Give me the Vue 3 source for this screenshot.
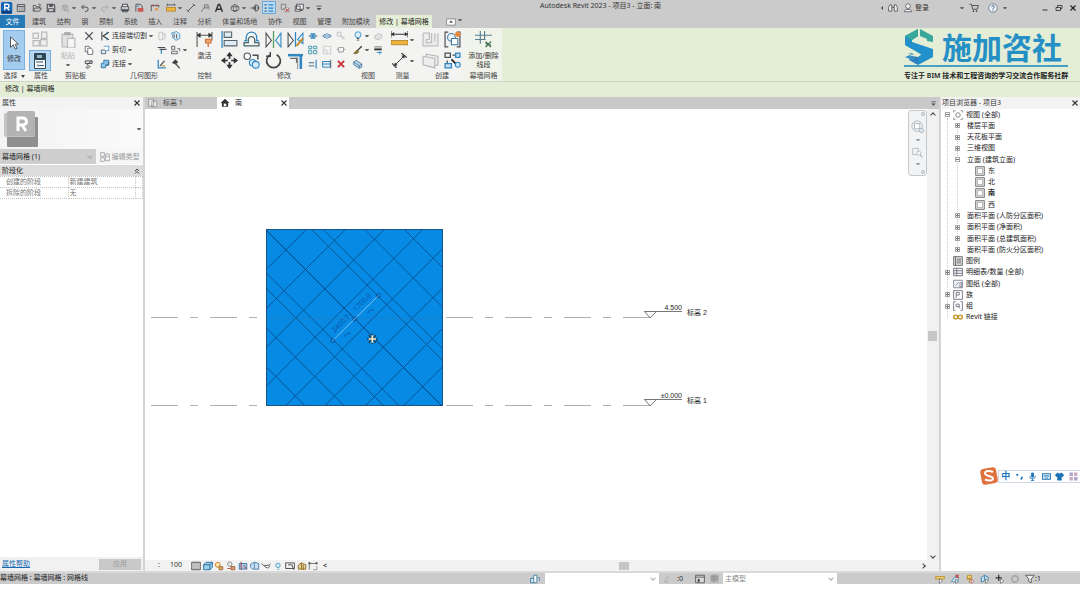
<script setup>
import { h } from 'vue'

const K = '#4a4f55'
const B = '#2f86c1'
const line = (d, c = K, w = 1.4, f = 'none') => `<path d="${d}" stroke="${c}" stroke-width="${w}" fill="${f}"/>`

const icons = {
  logo: `<rect x="0" y="0" width="15" height="16" rx="2" fill="#1565b4"/><rect x="1" y="12" width="13" height="3" fill="#0c3f7c"/>` + line('M5 11V3h3.5a2.2 2.2 0 0 1 0 4.6H5M8 7.6l3 3.4', '#fff', 1.8),
  home: line('M2 2.500h12v11H2zM2 5.500h12') + line('M5 8h2M9 8h3M5 11h2M9 11h3', K, 1.2),
  open: line('M2 13V4h4l1 2h5v2M2 13l3-5h10l-3 5zM10 2h3v3'),
  save: line('M2 2h10l2 2v10H2z', K, 1.8) + `<rect x="5" y="2" width="6" height="4" fill="${K}"/>` + line('M4 14V9h8v5'),
  sync: line('M4 5l4-2 4 2v5l-4 2-4-2zM4 5l4 2 4-2M8 7v5M11 13h4', '#999'),
  undo: line('M6 3L2.500 6.500 6 10M3 6.500h6.500a3.500 3.500 0 0 1 0 7H8', K, 1.6),
  redo: line('M10 3l3.500 3.500L10 10M13 6.500H6.500a3.500 3.500 0 0 0 0 7H8', '#aaa', 1.6),
  print: line('M4 6V2h8v4M2 6h12v6H2zM4 10h8v4H4z', K, 1.6, '#e8e8e8'),
  pdf: line('M3 14V2h7l3 3v5', K) + `<rect x="6" y="8" width="9" height="6" fill="#c9584e"/>` + line('M4 5h4', B),
  thin: line('M2 3v10M14 3v4M2 4h12', K) + line('M5 2v4M11 2v4', '#c9584e', 1.6) + `<rect x="8" y="8" width="5" height="4" fill="#e49a5a"/>`,
  ruler: line('M2 3h12M2 1v4M14 1v4') + `<rect x="1" y="7" width="14" height="6" fill="#efb33b" stroke="#a8761b"/>`,
  dim: line('M3 13L13 3M1 11l4 4M11 1l4 4', K, 1.5),
  tag: line('M2 14l5-7M7 3h6v5H7z', '#6b7178') + line('M9 8a3 3 0 1 1 4 3', '#8b9198'),
  text: line('M2.500 14L7 2.500h2L13.500 14M4.500 10h7', '#333', 2.4),
  cube: line('M8 2l6 4v5l-6 3-6-3V6zM2 6h12M8 2v4M5 6v6h6V6', K, 1.3, '#f0f0f0'),
  section: line('M1 8h4M11 8h4', K, 1.5) + line('M5 8l4-5v10z', K, 1, '#555') + line('M9 3a5 5 0 0 1 0 10', K),
  tree: line('M1 3h3M1 8h3M1 13h3', K, 2) + line('M7 3h8M7 8h8M7 13h8', B, 2),
  closeWin: line('M2 2h7v8H2z', '#777') + line('M8 8h6v6H8z', '#777', 1, '#fff') + line('M9 9l5 5M14 9l-5 5', '#c43a34', 1.6),
  windows: line('M4 2h11v8H4zM2 5h8v8H2z', K, 1.4, '#eee') + line('M9 12h5', K),
  more: line('M4 5h8') + `<path d="M4 8h8l-4 4z" fill="${K}"/>`,
  cursor: line('M4 1v12l3.200-3L9.500 15l2-1L9.300 9.300H13z', '#444', 1, '#fff'),
  types: line('M1 2h5v5H1zM9 1h5v6H9zM1 9h6v5H1zM8 8h6v6H8z', '#bbb', 1.2, '#efefef'),
  props: `<rect x="2" y="0" width="12" height="16" rx="1" fill="#2d4654"/><rect x="3" y="7" width="10" height="8" fill="#f8fbff"/>` + line('M4 9h5M10 8v2M7 12.500h5M6 11.500v2', '#3d5a6a', 1.2) + `<rect x="5" y="2" width="5" height="3" fill="#9ab4c4"/>`,
  paste: line('M2 3h10v12H2z', '#bcbcbc', 1.2, '#e2e2e2') + `<rect x="4" y="1" width="6" height="3" fill="#aaa"/>` + line('M7 7h7v9H7z', '#bcbcbc', 1.2, '#f5f5f5'),
  cut: line('M2 2l10 10M14 2L4 12', K, 1.8) + line('M2 13h3M11 13h3', K, 2),
  copyDoc: line('M2 2h6l2 2v7H2z', K, 1.2, '#fff') + line('M6 5h5l3 3v7H6z', K, 1.2, '#fff'),
  match: line('M2 3h11v4H2zM4 10l8-7', K, 1.6) + line('M3 14l4-4 3 2-3 3z', '#555', 1.2, '#ccc'),
  cope: line('M3 1v14', K, 1.8) + line('M14 2L5 8l9 6', '#333', 1.8) + line('M11 1v5M11 10v5', B, 1.2),
  cutGeo: line('M2 8h7v6H2z', K, 1.2, '#d6e9f7') + line('M6 2h8v7H9', B, 1.2, '#fff'),
  join: line('M2 7h4V2h8v8H9v4H2z', '#2477ad', 1.4, '#8cc3e8') + line('M9 10c4 0 5-3 5-5', K),
  joinRoof: line('M3 2h6v12H3z', '#bbb', 1.2) + line('M9 6l4-2v7l-4 2', '#bbb'),
  wallJoin: line('M1 3l8-2 5 4v7l-6 3-5-4z', B, 1.2, '#dcecf7') + line('M5 4v7M9 5v7', K),
  beam: line('M1 4h12M4 7h11', K, 1.8) + line('M7 8v6', B, 2),
  unjoin: line('M1 2h5v5H1zM1 10h9v4H1zM10 6h4v4', K, 1.3),
  paint: line('M2 1v13h12', B, 2) + line('M5 11L12 3', '#4a4f55', 2) + line('M7 11h6', '#d09030', 1.8),
  hammer: line('M7 7l7 8', '#555', 2.4) + line('M2 6l5-5 4 4-4 3z', '#333', 1, '#444'),
  activate: line('M1 1v14M15 1v8M1 4h14', '#555', 1) + line('M1 4l3-2v4zM15 4l-3-2v4z', '#333', .6, '#333') + line('M9 8h5v3H9zM11.500 11v4', '#d77b45', 1.4, '#f2b07e'),
  align: line('M1 0v16', B, 1.2) + line('M3 1h7v5H3zM3 9h12v5H3z', '#59636b', 1, '#dfeaf2'),
  offset: line('M1 14h14v-3h-4V8a3 3 0 0 0-1-2M1 14v-3h4V8a3 3 0 0 1 5-2', '#466', 1.2) + line('M3 9V6a5 5 0 0 1 10 0v3M1 9h3M12 9h3', B, 1.2),
  mirrorA: line('M1 2v13l5-6z', K, 1) + line('M15 2v13l-5-6z', B, 1, '#e7f3fb') + line('M8 0v16', '#53a05a', 1.2),
  mirrorB: line('M1 2v13l5-6z', K, 1) + line('M15 2v10l-5-4z', B, 1, '#e7f3fb') + line('M8 1v14', B, 1.2) + line('M9 14l6-7', '#c08f33', 2),
  move: line('M8 1v14M1 8h14', '#333', 1.6) + `<path d="M8 0l3 4H5zM8 16l3-4H5zM0 8l4-3v6zM16 8l-4-3v6z" fill="#333"/><circle cx="8" cy="8" r="1.600" fill="#fff"/>`,
  copy: `<circle cx="4" cy="4" r="3" fill="#fff" stroke="${K}"/><circle cx="9" cy="10" r="3" fill="#d5e9f8" stroke="${B}"/><circle cx="12" cy="12" r="3.200" fill="#d5e9f8" stroke="${B}"/>` + line('M9 3h5v4', K),
  rotate: line('M5 2.500A6.500 6.500 0 1 0 11 2.500', '#444', 1.6) + line('M5 0v4H1', '#444', 1.3),
  trim: line('M1 3h14', B, 2.4) + line('M13 3v13', B, 2.4) + line('M3 6h6v4', '#666', 1.2) + line('M10 5v11', '#777', .8),
  split: line('M1 8h4M11 8h4', K, 1.4) + line('M5 4h2v8H5zM9 4h2v8H9z', B, 1.6),
  splitGap: line('M1 8l4-3v6zM15 8l-4-3v6z', '#3e6ea5', 1.3) + line('M8 3v10', B, 1.3),
  unpin: line('M2 2h6v6H2zM9 10h5M8 8l5 6', '#bbb', 1.4),
  array: line('M1 2h5v4H1zM9 2h5v4H9zM1 9h5v5H1zM9 9h5v5H9z', '#3f98ad', 1.5),
  scale: line('M2 2h12v12H2zM2 8h6v6', '#c5c5c5', 1.3),
  pin: line('M4 4h8v7H4zM1 7h3M12 7h3M6 11v2', '#999', 1.4),
  trimS: line('M1 6h9M1 11h9', '#4d6d80', 1.6) + line('M13 1v14', B, 1.8),
  trimM: line('M1 4h12v9H1zM1 8h12', B, 1.6) + line('M14 1v14', K, 1.2),
  del: line('M3 3l10 10M13 3L3 13', '#c8363a', 3.2),
  bulb: `<circle cx="8" cy="6" r="4.800" fill="#d9efff" stroke="#3b8fc4" stroke-width="1.400"/>` + line('M6 12h4M6 14.500h4', K, 1.4),
  hide: line('M3 8l6-4 5 2v5l-6 3-5-2z', '#bbb', 1.3, '#e3e3e3'),
  brush: line('M14 2L7 9', '#333', 2) + line('M7 8c-3 0-2 4-6 5 4 2 8 0 8-3z', '#795b20', 1, '#8b7a35'),
  lines: line('M2 3h12', '#333', 1) + line('M2 7h12', '#333', 3) + line('M6 12h8M11 10v5', B, 1.4),
  box: line('M1 5l4-3 9 6v5l-4 2-9-6zM1 5l9 6M10 11l4-3M10 11v4', '#3c6a8b', 1.2, '#b8d6ec'),
  measure: line('M0 3h16M0 0v6M16 0v6', '#333', 1) + `<path d="M0 3l3-2v4zM16 3l-3-2v4z" fill="#333"/><rect x="0" y="9" width="16" height="4" fill="#efb33b" stroke="#a8761b" stroke-width=".7"/>`,
  aligned: line('M2 14L14 2', '#333', 1) + line('M0 11l5 5M10 0l6 5', '#333', 1.2) + `<path d="M2 14l1-4 3 3zM14 2l-4 1 3 3z" fill="#333"/>`,
  parts: line('M1 2v12h14V2M1 2h6v6H4v3h5V2M12 2v8', '#bdbdbd', 1.1, '#ededed'),
  group: line('M4 1H1v14h3M12 1h3v14h-3', K, 1.1) + `<circle cx="7" cy="6" r="3.600" fill="#eaf4fb" stroke="#3f79a0"/><path d="M7 7h6v6H7z" fill="#fff" stroke="#3f79a0"/><circle cx="13" cy="3" r="2.500" fill="#e8883a"/>`,
  assembly: line('M1 4l11 2v9L1 12zM4 4V2l11 2v8l-3 1', '#b8b8b8', 1.1, '#ededed'),
  create: line('M1 1h5v4H1zM3 8v5M8 3h3', K, 1.2) + line('M11 1h4v4h-4zM1 11h6v4H1z', B, 1.2, '#c4e0f5') + line('M7 7l4 4', '#222', 1.6) + `<circle cx="13" cy="12" r="2.300" fill="#d2e8f8" stroke="${B}"/>`,
  gridAdd: line('M5 0v12M9 0v8M0 4h16M0 8h10', '#5b7f92', 1.1) + line('M10 10l5 5M15 10l-5 5M10 12h1M14 13h1', '#356a48', 1.2),
  expand: line('M1 3h14v10H1z', '#777', 1.2, '#fff') + `<path d="M5 9l3-4 3 4z" fill="#555"/>`,
  bino: line('M1 13V7l2-4h3v10zM15 13V7l-2-4h-3v10zM6 7h4', K, 1.3, '#eee'),
  user: line('M2 14c0-5 12-5 12 0z', K, 1.2, '#f4f4f4') + `<circle cx="8" cy="5" r="3.800" fill="#f4f4f4" stroke="${K}" stroke-width="1.200"/>`,
  cart: line('M1 2h3l2 8h7l2-6H5', K, 1.5) + `<circle cx="7" cy="13" r="1.400" fill="${K}"/><circle cx="12" cy="13" r="1.400" fill="${K}"/>`,
  help: `<circle cx="8" cy="8" r="6.800" fill="#eef4fa" stroke="#59677a" stroke-width="1.200"/>` + line('M6 6.500c0-3 4-3 4-.5 0 2-2 1.500-2 4M8 11v1.500', '#35506e', 1.5),
  min: line('M3 12h10', '#333', 2),
  restore: line('M5 6V3h9v6h-3M2 7h9v6H2z', '#333', 1.7),
  x: line('M3 3l10 10M13 3L3 13', '#222', 2.4),
  x2: line('M3 3l10 10M13 3L3 13', '#333', 2.2),
  plan: line('M1 2h8v11H1zM6 5h8v9H6z', '#888', 1.2, '#eee'),
  house: `<path d="M8 1l7 7h-2v6H3V8H1z" fill="#333"/><rect x="6" y="9" width="4" height="4" fill="#fff"/>`,
  editType: line('M1 1h6v6H1zM1 9h6v6H1zM9 3h6v11H9zM9 7h6', '#999', 1.2),
  dbl: line('M4 8l4-4 4 4M4 13l4-4 4 4', '#333', 1.8),
  view: line('M1 4V1h3M12 1h3v3M15 12v3h-3M4 15H1v-3', '#777', 1.2) + `<circle cx="8" cy="8" r="3.600" fill="none" stroke="#666" stroke-width="1.200"/>`,
  legend: line('M1 1h14v14H1zM4 1v14M6 5h7M6 8h7M6 11h7', '#666', 1.4, '#ddd'),
  schedule: line('M1 2h14v12H1zM1 6h14M1 10h14M6 2v12', '#667', 1.4, '#fff'),
  sheet: line('M1 2h14v12H1zM11 6h3v7h-3zM4 11l5-6', '#778', 1.3, '#f4f7fa'),
  family: line('M1 1h14v14H1zM5 13V4h5v4H5', '#667', 1.3, '#fff'),
  groups: line('M4 1H1v14h3M12 1h3v14h-3M5 5h5v4H5zM8 8l3 4', '#667', 1.3),
  link: line('M1 8c0-4 6-4 7 0s7 4 7 0-6-4-7 0-7 4-7 0z', '#c69a35', 2.4),
  wheel: `<circle cx="7" cy="7" r="6" fill="#f1f4f6" stroke="#a9b2b9"/><rect x="4" y="4" width="6" height="6" fill="#fff" stroke="#a9b2b9"/><circle cx="12" cy="12" r="2.500" fill="#dbe8f2" stroke="#a9b2b9"/>`,
  zoomR: line('M1 2h8v9H1z', '#bbb') + `<circle cx="10" cy="9" r="3" fill="#f5f8fa" stroke="#a9b2b9"/>` + line('M12 11l3 4', '#a9b2b9', 1.6),
  detail: line('M1 2h14v12H1z', '#555', 1.4, '#aaa') + line('M1 5h14M1 8h14M1 11h14', '#eee', 1),
  vcube: line('M1 6l4-4h10v8l-4 4H1zM1 6h10v8M11 6l4-4', '#21678f', 1.4, '#9ed0ee'),
  sun: `<circle cx="6" cy="6" r="4" fill="#ffe2a0" stroke="#c47a2c" stroke-width="1.400"/>` + line('M8 9h6v5H8z', '#8d5a2d', 1.2, '#e9a85e'),
  shadow: `<circle cx="6" cy="5" r="3.500" fill="#eee" stroke="#777" stroke-width="1.300"/>` + line('M8 9h6v5H8zM2 12h5', '#a0562e', 1.4, '#e0a080'),
  crop: line('M2 4h12v9H2z', '#3973a5', 1.4, '#a5c8e5') + line('M5 1v13M9 7l5 6', '#a23b3b', 1.4),
  cropV: line('M1 5l6-3 7 2v9H4l-3-3zM7 2v10', '#3973a5', 1.3, '#cbe1f3'),
  glasses: line('M1 4l3 3h9a3 2.500 0 0 1-5 3L4 7M13 7l2-3', '#666', 1.6),
  reveal: `<circle cx="8" cy="7" r="3.500" fill="#d9f2ff" stroke="#4a9cbd" stroke-width="1.500"/>` + line('M7 13h3', '#4a9cbd', 1.4),
  temp: line('M1 3h14v9H1zM5 6h6l3 8', '#444', 1.4, '#eee'),
  model: line('M2 13V7l5-4 7 3v7zM7 3v10M10 6v8', '#8f6d27', 1.5, '#e6d399'),
  constr: line('M2 2v12M1 4h13M14 2v3', '#666', 1.3) + line('M14 8v6M8 14h6', '#888', 1.3) + `<path d="M1 2h3v3H1zM12 2h3v3h-3z" fill="#555"/>`,
  worksets: line('M1 7h6v7H1z', '#2c7697', 1.4, '#d9edf8') + line('M6 2h5v12H6zM12 6h3v5', '#2c7697', 1.3, '#fff'),
  edit: line('M2 14h8M3 12l8-9', '#aaa', 1.6),
  design: line('M1 2h14v12H1zM1 5h14', '#555', 1.4, '#ddd') + line('M5 8l3 2-3 3z', '#333', 1, '#333'),
  gridG: `<rect x="1" y="1" width="14" height="14" fill="#aaa"/>` + line('M1 5h14M1 9h14M7 1v14', '#888', 1),
  selLink: line('M1 4h14v4H1z', '#b58b25', 1.3, '#f0d275') + line('M7 7v8l5-4z', '#555', 1, '#fff'),
  selUnder: line('M2 12l6-8 5 1v8z', '#4b8db5', 1.3, '#c5e2f2') + line('M9 1l5 5M14 1L9 6', '#c4403e', 1.8) + line('M9 8v7l4-3z', '#555', 1, '#fff'),
  selPin: line('M4 2h6v5H4zM2 8h10M7 8v6', '#c08a2a', 1.5, '#f0d275') + line('M10 8v7l4-3z', '#a33', 1, '#fff'),
  selFace: line('M2 13V6l5-4v9zM7 2l6 3v5', '#2d7eae', 1.4, '#cfe6f5') + line('M9 8v7l4-3z', '#555', 1, '#fff'),
  drag: line('M6 1v10M1 6h10', '#333', 2) + line('M9 7v8l5-4z', '#555', 1, '#fff'),
  gear: `<circle cx="8" cy="8" r="5" fill="none" stroke="#a8a8a8" stroke-width="2.500"/>`,
  filter: line('M1 2h14l-5 6v6l-4-2V8z', '#555', 1.4, '#eee'),
  mic: `<rect x="5.500" y="1" width="5" height="9" rx="2.500" fill="#1a73b5"/>` + line('M3 7a5 5 0 0 0 10 0M8 12v3M5 15h6', '#1a73b5', 1.5),
  keyboard: line('M1 3h14v10H1z', '#1a73b5', 1.8, '#fff') + line('M3 6h10M3 8.500h10M5 11h6', '#1a73b5', 1.3),
  shirt: `<path d="M5 1l3 2 3-2 5 4-2 4-2-1v7H4V8L2 9 0 5z" fill="#1a73b5"/>`,
  apps: `<path d="M1 1h6v6H1zM9 9h6v6H9z" fill="#a9a3cf"/><path d="M9 1h6v6H9zM1 9h6v6H1z" fill="#c9a9bd"/>`,
  punct: `<circle cx="4" cy="5" r="2" fill="#1a73b5"/>` + line('M12 8c1 2 0 4-2 5', '#1a73b5', 2.6),
  elev: line('M1 1h14v14H1z', '#777', 1.5, '#ddd') + line('M4 4h8v8H4z', '#999', 1, '#fff'),
}

const Ico = (p) => h('svg', { viewBox: '0 0 16 16', width: p.s || 10, height: p.s || 10, 'aria-hidden': 'true', innerHTML: icons[p.n] })
Ico.props = ['n', 's']

const quick = [
  ['logo', 'home'],
  ['open', 'save', 'sync', '.'],
  ['undo', '.'],
  ['redo', '.'],
  ['print', 'pdf'],
  ['thin'],
  ['ruler', '.'],
  ['dim', 'tag', 'text'],
  ['cube', '.'],
  ['section', 'tree'],
  ['closeWin', 'windows', '.'],
  ['more'],
]
const tabs = ['建筑', '结构', '钢', '预制', '系统', '插入', '注释', '分析', '体量和场地', '协作', '视图', '管理', '附加模块']
const bigModify = ['align', 'offset', 'mirrorA', 'mirrorB', 'move', 'copy', 'rotate', 'trim']
const smallModify = ['split', 'splitGap', 'unpin', 'array', 'scale', 'pin', 'trimS', 'trimM', 'del']
const geo = [['cope', '连接端切割'], ['cutGeo', '剪切'], ['join', '连接']]

const tree = [
  { l: 0, e: '-', i: 'view', t: '视图 (全部)' },
  { l: 1, e: '+', t: '楼层平面' },
  { l: 1, e: '+', t: '天花板平面' },
  { l: 1, e: '+', t: '三维视图' },
  { l: 1, e: '-', t: '立面 (建筑立面)' },
  { l: 2, i: 'elev', t: '东' },
  { l: 2, i: 'elev', t: '北' },
  { l: 2, i: 'elev', t: '南', b: true },
  { l: 2, i: 'elev', t: '西' },
  { l: 1, e: '+', t: '面积平面 (人防分区面积)' },
  { l: 1, e: '+', t: '面积平面 (净面积)' },
  { l: 1, e: '+', t: '面积平面 (总建筑面积)' },
  { l: 1, e: '+', t: '面积平面 (防火分区面积)' },
  { l: 0, i: 'legend', t: '图例' },
  { l: 0, e: '+', i: 'schedule', t: '明细表/数量 (全部)' },
  { l: 0, i: 'sheet', t: '图纸 (全部)' },
  { l: 0, e: '+', i: 'family', t: '族' },
  { l: 0, e: '+', i: 'groups', t: '组' },
  { l: 0, i: 'link', t: 'Revit 链接' },
]
const viewTools = ['detail', 'vcube', 'sun', 'shadow', 'crop', 'cropV', 'glasses', 'reveal', 'temp', 'model', 'constr']
const selTools = ['selLink', 'selUnder', 'selPin', 'selFace', 'drag', 'gear']

// Curtain grid lines on a 531-unit panel: y = x + c for falling, x + y = s for rising
const falling = [-135, -170, -295, -414, 131, 177, 296, 413]
const rising = [122, 240, 356, 472, 589, 707, 828, 943]
</script>

<template>
  <div class="app">
    <header class="titlebar">
      <div class="quick">
        <div v-for="(g, gi) in quick" :key="gi" class="qgroup">
          <template v-for="(n, i) in g" :key="i">
            <button v-if="n === '.'" class="drop" aria-label="下拉"></button>
            <button v-else class="qbtn" :class="{ on: n === 'tree' }" :aria-label="n"><Ico :n="n" :s="n === 'logo' ? 12 : 10" /></button>
          </template>
        </div>
      </div>
      <h1 class="title">Autodesk Revit 2023 - 项目3 - 立面: 南</h1>
      <div class="account">
        <span class="left-arrow"></span>
        <button aria-label="搜索"><Ico n="bino" /></button>
        <button class="login"><Ico n="user" />登录</button>
        <button class="drop" aria-label="下拉"></button>
        <button aria-label="商店"><Ico n="cart" /></button>
        <button class="help" aria-label="帮助"><Ico n="help" /></button>
        <button class="drop" aria-label="下拉"></button>
      </div>
      <div class="winbtns">
        <button aria-label="最小化"><Ico n="min" s="8" /></button>
        <button aria-label="还原"><Ico n="restore" s="8" /></button>
        <button aria-label="关闭"><Ico n="x" s="8" /></button>
      </div>
    </header>

    <nav class="tabs">
      <button class="file">文件</button>
      <div class="tablist">
        <button v-for="t in tabs" :key="t">{{ t }}</button>
      </div>
      <button class="active">修改 | 幕墙网格</button>
      <button class="exp" aria-label="显示"><Ico n="expand" /></button>
      <button class="drop" aria-label="下拉"></button>
    </nav>

    <section class="ribbon">
      <div class="panel p-select">
        <div class="body"><button class="modify"><Ico n="cursor" s="14" /><span>修改</span></button></div>
        <div class="plabel">选择 <i class="tri"></i></div>
      </div>
      <div class="panel p-props">
        <div class="body big one">
          <button aria-label="类型属性"><Ico n="types" s="17" /></button>
          <button class="on" aria-label="属性"><Ico n="props" s="16" /></button>
        </div>
        <div class="plabel">属性</div>
      </div>
      <div class="panel p-clip">
        <div class="body">
          <button class="tall dim"><Ico n="paste" s="17" /><span>粘贴</span><i class="dot"></i></button>
          <div class="small"><button v-for="n in ['cut', 'copyDoc', 'match']" :key="n" :aria-label="n"><Ico :n="n" /></button></div>
        </div>
        <div class="plabel">剪贴板</div>
      </div>
      <div class="panel p-geo">
        <div class="body">
          <div class="geo">
            <button v-for="g in geo" :key="g[1]"><Ico :n="g[0]" />{{ g[1] }}<i class="dot"></i></button>
          </div>
          <div class="small"><button v-for="n in ['joinRoof', 'beam', 'paint']" :key="n" :aria-label="n"><Ico :n="n" /></button></div>
          <div class="small"><button v-for="n in ['wallJoin', 'unjoin', 'hammer']" :key="n" :aria-label="n"><Ico :n="n" /></button></div>
          <div class="dots"><i class="dot"></i></div>
        </div>
        <div class="plabel">几何图形</div>
      </div>
      <div class="panel p-ctrl">
        <div class="body"><button class="tall"><Ico n="activate" s="17" /><span>激活</span></button></div>
        <div class="plabel">控制</div>
      </div>
      <div class="panel p-mod">
        <div class="body">
          <div class="big four"><button v-for="n in bigModify" :key="n" :aria-label="n"><Ico :n="n" s="17" /></button></div>
          <div class="small three"><button v-for="n in smallModify" :key="n" :aria-label="n"><Ico :n="n" /></button></div>
        </div>
        <div class="plabel">修改</div>
      </div>
      <div class="panel p-view">
        <div class="body">
          <div class="small"><button v-for="n in ['bulb', 'brush', 'box']" :key="n" :aria-label="n"><Ico :n="n" /></button></div>
          <div class="dots two"><i class="dot"></i><i class="dot"></i></div>
          <div class="small"><button v-for="n in ['hide', 'lines']" :key="n" :aria-label="n"><Ico :n="n" /></button></div>
        </div>
        <div class="plabel">视图</div>
      </div>
      <div class="panel p-meas">
        <div class="body">
          <div class="big one"><button aria-label="测量"><Ico n="measure" s="17" /></button><button aria-label="对齐"><Ico n="aligned" s="15" /></button></div>
          <div class="dots pair"><i class="dot"></i><i class="dot"></i></div>
        </div>
        <div class="plabel">测量</div>
      </div>
      <div class="panel p-create">
        <div class="body">
          <div class="big twoc"><button v-for="n in ['parts', 'group', 'assembly', 'create']" :key="n" :aria-label="n"><Ico :n="n" s="17" /></button></div>
        </div>
        <div class="plabel">创建</div>
      </div>
      <div class="panel p-grid">
        <div class="body"><button class="tall"><Ico n="gridAdd" s="17" /><span>添加/删除</span><span>线段</span></button></div>
        <div class="plabel">幕墙网格</div>
      </div>

      <div class="brand">
        <div class="brand-top">
          <svg viewBox="0 0 30 36" width="30" height="36" aria-hidden="true">
            <path d="M14 0L1 7v9l17 10 5-4L8 13v-2l6-4z" fill="#2a96bd" />
            <path d="M14 0L1 7l7 4 6-4zM16 0l13 7v6l-6-1V10l-7-3z" fill="#3aa79b" />
            <path d="M1 9v7l17 9-4 3v8l15-8v-8L8 13z" fill="#2190cb" />
            <path d="M14 28v8l-9-5 3-4z" fill="#2b7fbd" />
            <path d="M1 28l5-2 5 3-3 2zM4 25l4-1 2 2z" fill="#3a8fc4" />
          </svg>
          <strong>施加咨社</strong>
        </div>
        <p>专注于 BIM 技术和工程咨询的学习交流合作服务社群</p>
      </div>
    </section>

    <div class="options">修改 | 幕墙网格</div>

    <main class="work">
      <aside class="props">
        <div class="phead">属性<button aria-label="关闭"><Ico n="x2" s="8" /></button></div>
        <button class="typesel" aria-label="类型选择器">
          <svg viewBox="0 0 34 36" width="34" height="36" aria-hidden="true">
            <rect x="3" y="6" width="31" height="30" rx="1" fill="#8f8f8f" />
            <rect x="0" y="2" width="31" height="24" rx="2" fill="#c4c4c4" />
            <rect x="3" y="0" width="28" height="25" rx="2" fill="#b3b3b3" />
            <path d="M14 20V7h5a3.500 3.500 0 0 1 0 7h-5M18 14l4 6" fill="none" stroke="#fff" stroke-width="3" />
          </svg>
          <i class="dot"></i>
        </button>
        <div class="filter">
          <span class="selwrap fsel"><select aria-label="图元"><option>幕墙网格 (1)</option></select></span>
          <button><Ico n="editType" />编辑类型</button>
        </div>
        <div class="ghead">阶段化<Ico n="dbl" s="8" /></div>
        <table>
          <tbody>
            <tr><th>创建的阶段</th><td>新建建筑</td><td class="end"></td></tr>
            <tr><th>拆除的阶段</th><td>无</td><td class="end"></td></tr>
          </tbody>
        </table>
        <div class="pfoot"><a href="#">属性帮助</a><button disabled>应用</button></div>
      </aside>

      <section class="view">
        <div class="vtabs">
          <button class="vtab"><Ico n="plan" />标高 1</button>
          <div class="vtab cur"><Ico n="house" />南<button aria-label="关闭"><Ico n="x2" s="8" /></button></div>
          <button class="vmore" aria-label="更多"><Ico n="more" s="9" /></button>
        </div>
        <div class="vmid">
          <div class="canvas">
            <svg class="drawing" width="100%" height="100%">
              <g transform="translate(-145 -109)">
                <g stroke="#b0b0b0" fill="none">
                  <path d="M151 317.500H258M446 317.500H650M151 405.500H258M446 405.500H650" stroke-dasharray="27 12 8 12" />
                  <path d="M644 311.500H682M645 312l5 6 6-6M644 399.500H682M645 400l5 6 6-6" stroke="#777" />
                </g>
                <g class="lvl">
                  <text x="682" y="310" text-anchor="end">4.500</text>
                  <text x="682" y="398" text-anchor="end">±0.000</text>
                  <text x="687" y="315">标高 2</text>
                  <text x="687" y="403">标高 1</text>
                </g>
                <svg x="266" y="229" width="177" height="177" viewBox="0 0 531 531">
                  <rect width="531" height="531" fill="#068ae4" />
                  <g stroke="#0a4a86" stroke-width="2.500">
                    <line v-for="c in falling" :key="'f' + c" x1="-10" :y1="c - 10" x2="540" :y2="c + 540" />
                    <line v-for="s in rising" :key="'r' + s" x1="-10" :y1="s + 10" x2="540" :y2="s - 540" />
                    <line x1="0" y1="3" x2="531" y2="534" stroke-width="3" stroke="#093f78" />
                  </g>
                  <path d="M0 268H531" stroke="#2b7fc0" stroke-width="2" />
                  <path d="M200 335L337 200" stroke="#7fc0f2" stroke-width="3" />
                  <g fill="none" stroke="#0b3f86" stroke-width="2">
                    <circle cx="200" cy="335" r="6" /><circle cx="267" cy="270" r="6" /><circle cx="337" cy="200" r="6" />
                  </g>
                  <g font-size="21" fill="#0757b0" stroke="none">
                    <text transform="translate(206 312) rotate(-45)">2400.7</text>
                    <text transform="translate(270 248) rotate(-45)">1700.0</text>
                    <path d="M234 322l12-10 8 2M304 252l12-10 8 2" fill="none" stroke="#0757b0" stroke-width="3" />
                  </g>
                  <rect x="1" y="1" width="529" height="529" fill="none" stroke="#1d4a73" stroke-width="3" />
                  <path d="M319 314v32M303 330h32M308 319l22 22M330 319l-22 22" stroke="#243a4d" stroke-width="4" />
                  <path d="M319 319v22M308 330h22" stroke="#f5f3cf" stroke-width="5" />
                </svg>
              </g>
            </svg>
            <div class="nav">
              <i class="ring"></i>
              <button aria-label="控制盘"><Ico n="wheel" s="14" /></button>
              <i class="dot"></i>
              <button aria-label="缩放"><Ico n="zoomR" s="11" /></button>
              <i class="dot"></i>
              <i class="ring"></i>
            </div>
          </div>
          <div class="vscroll"><span class="up"></span><span class="thumb"></span><span class="down"></span></div>
        </div>
        <div class="vbar">
          <span class="scale"><span>:</span><span>100</span></span>
          <div class="vtools">
            <button v-for="n in viewTools" :key="n" :aria-label="n"><Ico :n="n" /></button>
            <span class="lt">&lt;</span>
          </div>
          <div class="hscroll"><span class="thumb"></span><span class="right"></span></div>
        </div>
      </section>

      <aside class="browser">
        <div class="phead">项目浏览器 - 项目3<button aria-label="关闭"><Ico n="x2" s="8" /></button></div>
        <ul class="tree">
          <li v-for="(r, i) in tree" :key="i" :class="['l' + r.l, { bold: r.b }]">
            <span class="ex" :class="{ box: r.e, plus: r.e === '+' }"></span>
            <Ico v-if="r.i" :n="r.i" />
            <span>{{ r.t }}</span>
          </li>
        </ul>
      </aside>
    </main>

    <footer class="status">
      <span class="msg">幕墙网格 : 幕墙网格 : 网格线</span>
      <Ico n="worksets" />
      <span class="selwrap ws"><select aria-label="工作集"><option></option></select></span>
      <div class="mid"><Ico n="edit" s="9" /><span>:0</span></div>
      <div class="mid"><Ico n="design" /><Ico n="gridG" s="9" /></div>
      <span class="selwrap ws"><select aria-label="设计选项"><option>主模型</option></select></span>
      <div class="sel">
        <button v-for="n in selTools" :key="n" :aria-label="n"><Ico :n="n" /></button>
        <button class="flt"><Ico n="filter" />:1</button>
      </div>
    </footer>

    <div class="ime">
      <svg class="sogou" viewBox="0 0 18 18" width="18" height="18" aria-hidden="true">
        <rect x="1" y="1" width="16" height="16" rx="3" fill="#e0703c" transform="rotate(-10 9 9)" />
        <path d="M13 5C9 3 5 4 5 6.500S13 9 13 11.500 8 14 5 12.500" fill="none" stroke="#fff" stroke-width="2" />
      </svg>
      <div class="imebar">
        <button class="zh">中</button>
        <button v-for="n in ['punct', 'mic', 'keyboard', 'shirt', 'apps']" :key="n" :aria-label="n"><Ico :n="n" s="9" /></button>
      </div>
    </div>
  </div>
</template>

<style>
body { margin: 0; background: #fff; }
</style>

<style scoped>
* { box-sizing: border-box; }
.app {
  display: flex; flex-direction: column; position: relative;
  min-height: 100vh; padding-bottom: 24px;
  font: 7px/10px "Noto Sans", "Noto Sans CJK SC", sans-serif; color: #333;
}
button, select {
  font: inherit; color: inherit; background: none; border: 0; padding: 0; margin: 0;
  appearance: none; display: flex; align-items: center; justify-content: center; white-space: nowrap;
}
svg { display: block; flex: none; }
.dot, .drop { width: 4px; height: 10px; flex: none; display: flex; align-items: center; justify-content: center; }
.dot::after, .drop::after { content: ""; border: 1px solid transparent; border-top: 2px solid #666; border-bottom: 0; width: 3px; }

/* title bar */
.titlebar { display: flex; align-items: center; height: 15px; background: #cbcbcb; }
.quick { display: flex; gap: 2px; height: 14px; }
.qgroup { display: flex; align-items: center; }
.qbtn { width: 14px; height: 13px; }
.qbtn.on { background: #b9dcf6; border: 1px solid #6ba7d6; }
.title { margin: 0; font: inherit; flex: 1; padding-left: 214px; height: 14px; white-space: nowrap; }
.account { display: flex; align-items: center; gap: 5px; width: 160px; }
.login { gap: 2px; margin-right: 26px; }
.help { margin-left: 4px; }
.left-arrow { border: 2px solid transparent; border-right-color: #444; border-left: 0; }
.winbtns { display: flex; gap: 6px; width: 39px; }

/* ribbon tabs */
.tabs { display: flex; align-items: stretch; height: 13px; background: #cbcbcb; color: #444; }
.file { width: 25px; background: #2479b7; color: #fff; }
.tablist { display: flex; justify-content: space-between; width: 338px; margin: 0 6px 0 7px; }
.active { width: 56px; background: #e6eed7; color: #222; }
.exp { width: 14px; margin-left: 12px; }

/* ribbon */
.ribbon { display: flex; height: 54px; background: #e4edd5; border-bottom: 1px solid #cdd4c2; }
.panel { background: #f3f3f2; padding-top: 1px; display: flex; flex-direction: column; }
.body { display: flex; height: 42px; }
.plabel { height: 10px; display: flex; align-items: center; justify-content: center; gap: 3px; white-space: nowrap; color: #444; }
.tri { border: 2px solid transparent; border-top: 3px solid #444; border-bottom: 0; }
.p-select { width: 28px; }
.p-props { width: 26px; }
.p-clip { width: 43px; }
.p-geo { width: 94px; }
.p-ctrl { width: 27px; }
.p-mod { width: 132px; }
.p-view { width: 35px; padding-left: 1px; }
.p-meas { width: 32px; padding-left: 3px; }
.p-create { width: 48px; padding-left: 2px; }
.p-grid { width: 37px; background: #f1f4ea; }
.modify { width: 22px; height: 40px; margin: 1px 0 0 3px; background: #a3ccee; border: 1px solid #79b1e0; flex-direction: column; gap: 4px; }
.big { display: grid; grid-template-rows: 21px 21px; }
.one { grid-template-columns: 22px; }
.twoc { grid-template-columns: 22px 22px; }
.four { grid-template-columns: 22px 22px 22px 22px; }
.p-props .one { padding-left: 1px; }
.big .on { background: #b5d7f1; border: 1px solid #74add9; }
.small { display: grid; grid-template-rows: 14px 14px 14px; grid-template-columns: 14px; }
.three { grid-template-columns: 14px 14px 14px; }
.tall { flex-direction: column; justify-content: flex-start; padding-top: 2px; width: 28px; }
.tall span { line-height: 9px; }
.tall svg { margin-bottom: 3px; }
.p-ctrl .tall { width: 27px; }
.p-grid .tall { width: 37px; }
.dim { color: #b5b5b5; }
.geo { display: grid; grid-template-rows: 14px 14px 14px; width: 58px; padding-left: 3px; }
.geo button { justify-content: flex-start; gap: 2px; }
.dots { display: flex; flex-direction: column; justify-content: center; width: 6px; }
.two { justify-content: flex-start; gap: 4px; padding-top: 2px; }
.pair { justify-content: space-around; }
.brand { margin-left: auto; margin-right: 12px; width: 164px; }
.brand-top { display: flex; align-items: center; gap: 8px; height: 39px; border-bottom: 2px solid #4b9fc2; }
.brand strong { font: 700 30px/34px "Noto Sans CJK SC", sans-serif; color: #2590c6; white-space: nowrap; padding-bottom: 2px; }
.brand p { margin: 4px 0 0; font-weight: 600; color: #222; white-space: nowrap; }

.options { height: 15px; padding: 2px 5px; background: #e4edd5; color: #222; }

/* workspace */
.work { flex: 1; display: flex; background: #ececec; }
.props { width: 145px; display: flex; flex-direction: column; background: #fff; border-right: 2px solid #d4d4d4; }
.phead { display: flex; justify-content: space-between; align-items: center; height: 12px; padding: 0 2px; background: #f3f3f3; }
.typesel { height: 40px; justify-content: space-between; padding: 0 2px 0 4px; background: linear-gradient(90deg, #f3f3f3, #fafafa); }
.filter { display: flex; height: 15px; }
.filter button { flex: 1; gap: 2px; color: #999; background: #f6f6f6; }
.selwrap { position: relative; display: flex; }
.selwrap select { flex: 1; padding-left: 2px; }
.selwrap::after { content: ""; position: absolute; right: 4px; top: 3px; width: 3px; height: 3px; border: solid #aaa; border-width: 0 1px 1px 0; transform: rotate(45deg); }
.fsel { width: 96px; background: #cecece; color: #222; align-items: center; }
.fsel::after { top: 5px; }
.ghead { display: flex; justify-content: space-between; align-items: center; height: 11px; margin-top: 1px; padding: 0 2px; background: #dcdcdc; color: #222; }
table { border-collapse: collapse; width: 100%; color: #777; }
th, td { font-weight: 400; text-align: left; height: 11px; padding: 0 1px; border: 1px dotted #c4c4c4; border-left: 0; line-height: 10px; }
th { width: 68px; padding-left: 6px; }
.end { width: 7px; }
.pfoot { margin-top: auto; display: flex; align-items: center; justify-content: space-between; height: 14px; padding: 0 2px; background: #f1f1f1; }
.pfoot a { color: #1769b5; }
.pfoot button { width: 42px; height: 11px; background: #c9c9c9; color: #999; }

.view { flex: 1; min-width: 0; display: flex; flex-direction: column; }
.vtabs { display: flex; height: 12px; background: #c9c9c9; }
.vtab { width: 72px; justify-content: flex-start; gap: 5px; padding-left: 3px; color: #444; display: flex; align-items: center; }
.cur { background: #fff; color: #222; }
.cur button { margin-left: auto; margin-right: 1px; }
.vmore { margin-left: auto; width: 11px; }
.vmid { flex: 1; display: flex; padding-right: 1px; }
.canvas { flex: 1; position: relative; background: #fff; }
.drawing { position: absolute; inset: 0; overflow: hidden; }
.lvl { font: 7px "Liberation Sans Narrow", "Liberation Sans", "Noto Sans CJK SC", sans-serif; fill: #222; }
.nav { position: absolute; top: 1px; right: 0; width: 19px; height: 66px; background: #f2f3f4; border: 1px solid #c6c9cc; border-radius: 3px; display: flex; flex-direction: column; align-items: center; justify-content: space-between; padding: 1px; }
.nav .dot { height: 4px; opacity: .6; }
.ring { width: 4px; height: 4px; border: 1px solid #b5b5b5; border-radius: 50%; align-self: flex-end; }
.vscroll { width: 11px; background: #f1f1f1; display: flex; flex-direction: column; justify-content: space-between; align-items: center; padding: 4px 0 2px; }
.up, .down, .right { width: 4px; height: 4px; border: solid #444; border-width: 1px 0 0 1px; transform: rotate(45deg); }
.down { transform: rotate(225deg); }
.right { transform: rotate(135deg); }
.vscroll .thumb { width: 9px; height: 10px; background: #c6c6c6; }
.vbar { display: flex; height: 11px; background: #f2f2f2; }
.scale { width: 45px; padding: 0 8px 0 13px; display: flex; justify-content: space-between; }
.vtools { display: grid; grid-auto-flow: column; grid-template-columns: repeat(12, 1fr); width: 141px; align-items: center; }
.lt { text-align: center; font-weight: 700; }
.hscroll { flex: 1; display: flex; align-items: center; justify-content: space-between; padding: 0 14px 0 288px; }
.hscroll .thumb { width: 10px; height: 8px; background: #c6c6c6; }

.browser { width: 141px; background: #fff; border-left: 2px solid #d4d4d4; }
.browser .phead { padding: 0 1px; }
.tree { position: relative; list-style: none; margin: 0; padding: 0 0 0 4px; height: 214px; display: grid; grid-template-rows: repeat(19, 1fr); color: #222; }
.tree::before, .tree::after { content: ""; position: absolute; border-left: 1px dotted #c9c9c9; }
.tree::before { left: 6px; top: 9px; height: 200px; }
.tree::after { left: 16px; top: 15px; height: 124px; }
.tree li { display: flex; align-items: center; gap: 3px; white-space: nowrap; }
.ex { width: 5px; height: 5px; flex: none; position: relative; z-index: 1; }
.box { border: 1px solid #a5a5a5; background: #fff; }
.box::before { content: ""; position: absolute; top: 1px; left: 0; width: 3px; height: 1px; background: #777; }
.plus::after { content: ""; position: absolute; top: 0; left: 1px; width: 1px; height: 3px; background: #777; }
.tree .l1 { padding-left: 10px; gap: 7px; }
.tree .l2 { padding-left: 22px; }
.bold { font-weight: 700; }

/* status bar */
.status { display: flex; align-items: stretch; height: 13px; background: #cbcbcb; border-top: 2px solid #d9d9d9; }
.status > svg { align-self: center; margin-right: 5px; }
.msg { width: 530px; color: #222; }
.ws { width: 114px; background: #fff; color: #888; }
.mid { display: flex; align-items: center; gap: 5px; width: 32px; padding-left: 4px; }
.sel { margin-left: auto; display: flex; gap: 5px; padding-right: 39px; }

.ime { position: absolute; right: 0; top: 467px; display: flex; align-items: center; }
.imebar { display: flex; align-items: center; justify-content: space-around; width: 82px; height: 13px; background: #fff; border: 1px solid #cfd9e6; border-right: 0; }
.zh { color: #1a73b5; font-weight: 700; font-size: 9px; }
</style>
